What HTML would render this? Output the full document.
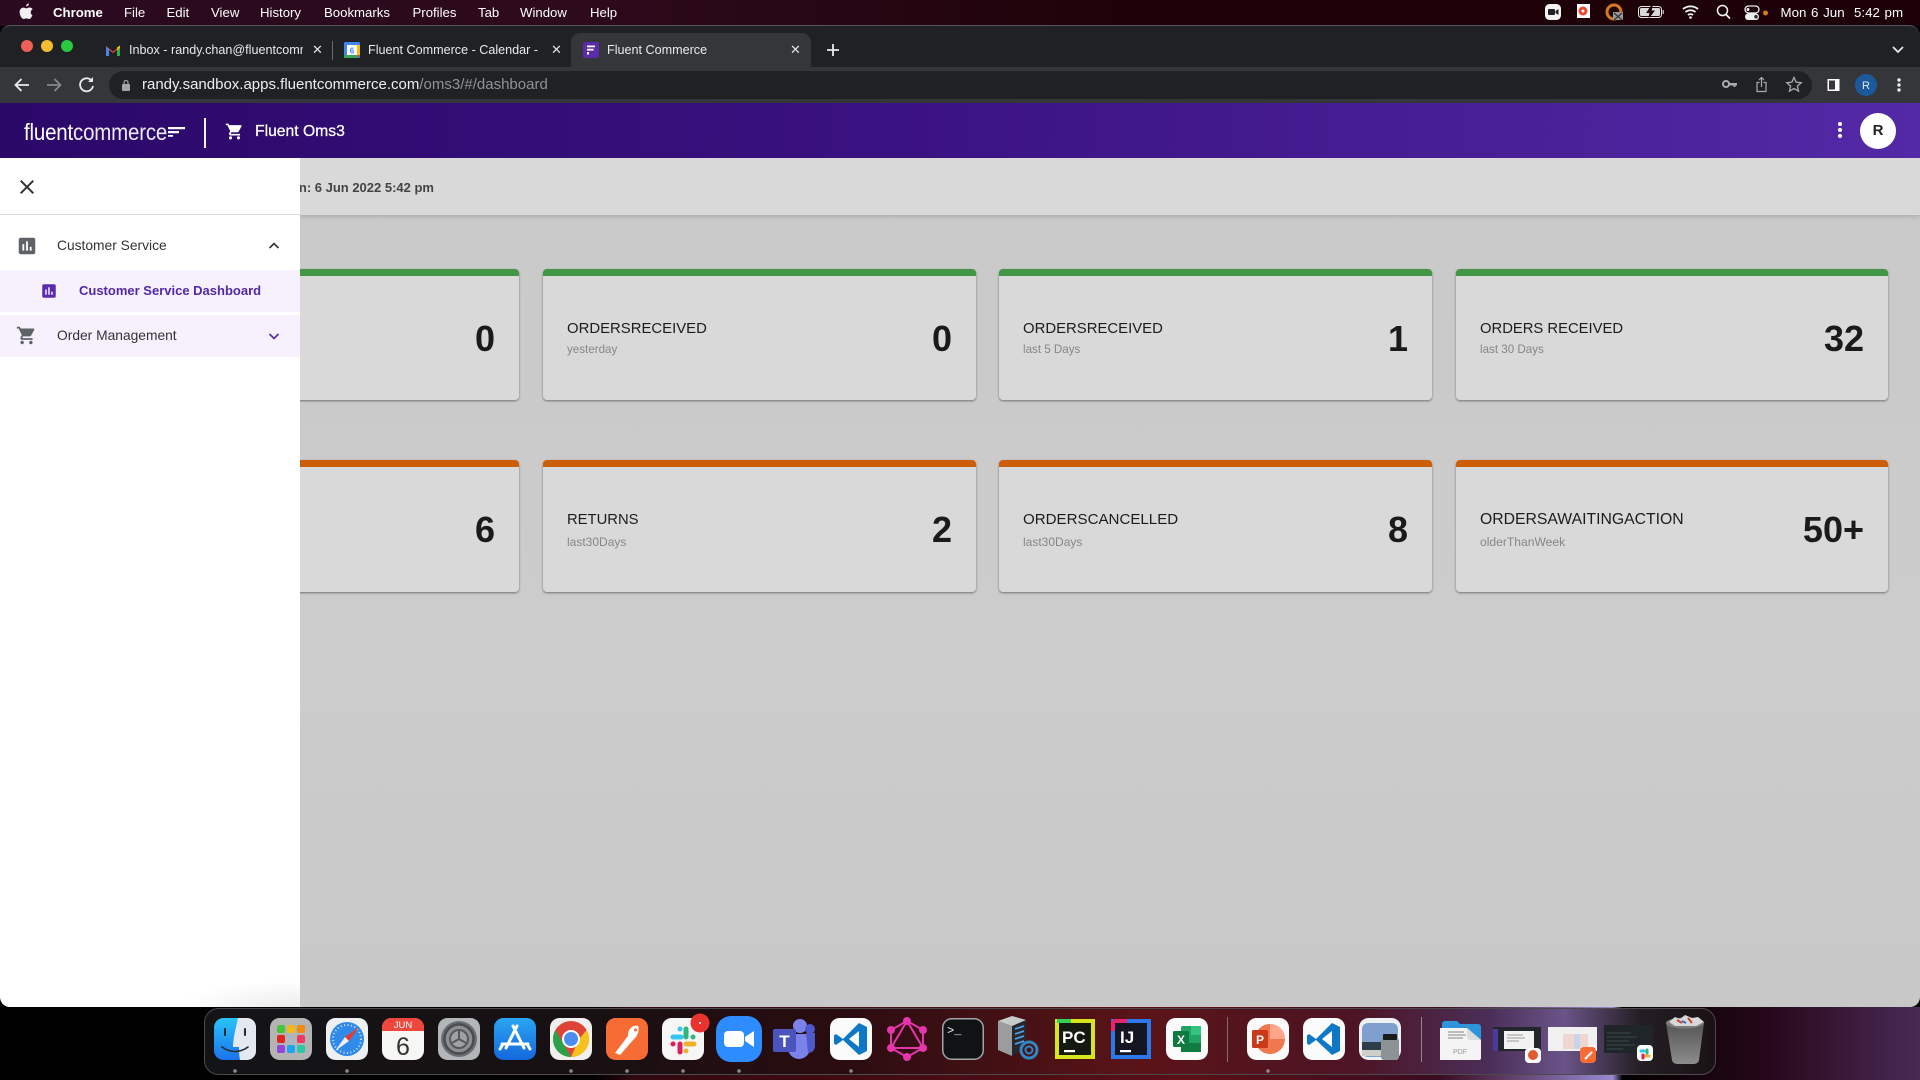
<!DOCTYPE html>
<html lang="en"><head><meta charset="utf-8"><title>Fluent Commerce</title>
<style>
*{box-sizing:border-box}
html,body{margin:0;padding:0;width:1920px;height:1080px;overflow:hidden;background:#000;font-family:"Liberation Sans",sans-serif}
.t{position:absolute;white-space:nowrap}
.abs{position:absolute}
#menubar{left:0;top:0;width:1920px;height:26px;background:linear-gradient(90deg,#2a0a1e 0%,#2d0a1c 30%,#1e0208 60%,#1c0208 100%);color:#fff;font-size:13.2px;line-height:25px}
#chrome{left:0;top:25px;width:1920px;height:78px;background:#202124;border-radius:11px 11px 0 0;border-top:1px solid #55565a}
#toolbar{left:0;top:67px;width:1920px;height:37px;background:#35363a;border-bottom:1px solid #55565a}
#pill{left:109px;top:71px;width:1703px;height:28px;background:#202124;border-radius:14px}
#activetab{left:571px;top:33px;width:240px;height:34px;background:#35363a;border-radius:9px 9px 0 0}
.tab{font-size:12.6px;line-height:16px;color:#e8eaed;top:42px;overflow:hidden}
.x{font-size:13px;color:#e0e2e5;top:43px;line-height:14px}
#head{left:0;top:103px;width:1920px;height:55px;background:linear-gradient(92deg,#2a0868 0%,#3a1180 45%,#5329a6 100%)}
#main{left:0;top:158px;width:1920px;height:849px;background:linear-gradient(180deg,#c9c9c9,#cccccc 60%,#c8c8c8);border-radius:0 0 10px 10px;overflow:hidden}
#bar{left:0;top:0;width:1920px;height:57px;background:#d9d9d9;box-shadow:0 1px 5px rgba(0,0,0,.18)}
.card{position:absolute;width:433px;background:#d9d9d9;border-radius:4px;box-shadow:0 1px 2px rgba(0,0,0,.45);overflow:hidden;color:#1c1c1c}
.card i{position:absolute;left:0;top:0;width:100%;height:7px}
.card b{position:absolute;right:24px;top:50px;font-size:36px;line-height:40px;font-weight:700;color:#1a1a1a}
.card span{position:absolute;left:24px;font-size:15px;line-height:18px;white-space:nowrap}
.card em{position:absolute;left:24px;font-style:normal;font-size:11.6px;line-height:14px;color:#868686;white-space:nowrap}
.r1{height:131px;top:111px}.r2{height:132px;top:302px}
.r1 span{top:51px}.r1 em{top:74px}.r2 span{top:51px}.r2 em{top:75px}
.g i{background:#429646}.o i{background:#cc5e0a}
#side{left:0;top:0;width:300px;height:849px;background:radial-gradient(120px 26px at 300px 849px,#ececec,#fff 100%);border-radius:0 0 0 10px;color:#333;z-index:3}
.row{position:absolute;left:0;width:300px;background:#f7f0fd}
.lab{font-size:13.8px;line-height:18px;color:#333}
#below{left:0;top:1007px;width:1920px;height:73px;background:linear-gradient(90deg,#000 0%,#000 31%,#300810 33%,#5a0f16 62%,#3a0c20 75%,#8d7cc0 83%,#9c88d0 84%,#000 84.5%,#0a0103 86%,#25081a 92%,#4a2a55 100%)}
</style></head><body>

<div id="menubar" class="abs">
<svg class="abs" style="left:19px;top:3px" width="14" height="17" viewBox="0 0 14 17"><path fill="#f2f2f2" d="M10 .5c.1 1.3-1.2 3-2.9 2.9C6.900 2 8.400.6 10 .5zM13.400 12.200c-.6 1.500-2 3.800-3.300 3.800-1 0-1.400-.6-2.700-.6s-1.700.6-2.700.6C3 16 .6 12.200.6 9.200c0-3 2-4.600 3.800-4.600 1.200 0 2.100.8 2.900.8.7 0 1.800-.9 3.200-.9.600 0 2.200.2 3.100 1.600-2.700 1.700-2.200 5.200-.2 6.100z"/></svg>
<span class="t" style="left:53px;font-weight:700">Chrome</span>
<span class="t" style="left:124px">File</span>
<span class="t" style="left:166.500px">Edit</span>
<span class="t" style="left:211px">View</span>
<span class="t" style="left:260px">History</span>
<span class="t" style="left:324px">Bookmarks</span>
<span class="t" style="left:412.500px">Profiles</span>
<span class="t" style="left:478px">Tab</span>
<span class="t" style="left:520px">Window</span>
<span class="t" style="left:590px">Help</span>
<svg class="abs" style="left:1530px;top:0" width="250" height="25" viewBox="0 0 250 25">
<rect x="15" y="4" width="16" height="16" rx="4.500" fill="#f4f4f4"/><rect x="18" y="9" width="7" height="6" rx="1" fill="#222"/><path d="M25.500 11l3-2v6l-3-2z" fill="#222"/>
<rect x="47" y="4" width="13" height="14" fill="#fff"/><circle cx="53" cy="11" r="4.500" fill="#e8482f"/><circle cx="53" cy="11" r="1.500" fill="#fff"/>
<circle cx="84" cy="12" r="7" fill="none" stroke="#d9791f" stroke-width="3"/><rect x="83" y="12" width="10" height="8" fill="#9a9a9a"/><path d="M84 13l8 7m0-7l-8 7" stroke="#333" stroke-width="1.200"/>
<rect x="108.500" y="6.500" width="23" height="11" rx="3" fill="none" stroke="#e8e8e8"/><rect x="110" y="8" width="20" height="8" rx="1.500" fill="#d8d8d8"/><path d="M121 6.500l-4 6h3l-1 5 5-6.500h-3l1-4.500z" fill="#1e0208" stroke="#1e0208"/><rect x="132.500" y="10" width="1.500" height="4" fill="#aaa"/>
<path d="M153 9a12 12 0 0 1 15 0M155.500 12a8 8 0 0 1 10 0M158 15a4 4 0 0 1 5 0" fill="none" stroke="#f4f4f4" stroke-width="1.800"/><circle cx="160.500" cy="17.500" r="1.300" fill="#fff"/>
<circle cx="192.500" cy="10.500" r="5" fill="none" stroke="#f2f2f2" stroke-width="1.500"/><path d="M196 14.500l4 4" stroke="#f2f2f2" stroke-width="1.800"/>
<rect x="215" y="6" width="14" height="7" rx="3.500" fill="none" stroke="#eee" stroke-width="1.300"/><rect x="215" y="13.500" width="14" height="6.500" rx="3.200" fill="#eee"/><circle cx="218" cy="9.500" r="1.500" fill="#eee"/><circle cx="226" cy="16.700" r="1.800" fill="#333"/>
<circle cx="235.500" cy="13" r="2.500" fill="#d9791f"/></svg>
<span class="t" style="left:1780.500px;font-size:13.300px;word-spacing:1px">Mon 6 Jun&nbsp; 5:42 pm</span>
</div>

<div id="chrome" class="abs"></div>
<div id="toolbar" class="abs"></div>
<div id="activetab" class="abs"></div>
<div id="pill" class="abs"></div>

<svg class="abs" style="left:0;top:30px" width="90" height="30"><circle cx="27" cy="16" r="6" fill="#ed5f57"/><circle cx="47" cy="16" r="6" fill="#f5bd30"/><circle cx="67" cy="16" r="6" fill="#2ac840"/></svg>
<svg class="abs" style="left:105px;top:44px" width="16" height="13" viewBox="0 0 16 13"><path d="M1 12V2l7 5.500L15 2v10h-3V6L8 9 4 6v6z" fill="#ea4335"/><path d="M1 12V2.500L4 5v7z" fill="#4285f4"/><path d="M15 12V2.500L12 5v7z" fill="#34a853"/><path d="M15 1.500V4l-3 2.300V3.500z" fill="#fbbc04"/></svg>
<div class="t tab" style="left:129px;width:174px">Inbox - randy.chan@fluentcommerce</div>
<div class="t x" style="left:312px">✕</div>
<div class="abs" style="left:332px;top:41px;width:1px;height:19px;background:#6a6b6f"></div>
<svg class="abs" style="left:344px;top:42px" width="16" height="16" viewBox="0 0 16 16"><rect width="16" height="16" rx="1.500" fill="#4285f4"/><rect x="3" y="3" width="10" height="10" fill="#fff"/><rect y="13" width="13" height="3" fill="#34a853"/><rect x="13" y="3" width="3" height="10" fill="#fbbc04"/><path d="M13 13h3l-3 3z" fill="#ea4335"/><text x="8" y="11.500" font-size="8" font-weight="700" text-anchor="middle" fill="#4285f4" font-family="Liberation Sans">6</text></svg>
<div class="t tab" style="left:368px;width:172px">Fluent Commerce - Calendar - Jun</div>
<div class="t x" style="left:551px">✕</div>
<svg class="abs" style="left:583px;top:42px" width="16" height="16" viewBox="0 0 16 16"><rect width="16" height="16" rx="2" fill="#5a2ca8"/><path d="M4 3.500h8v1.800H4zM4 6.800h6.500v1.800H4zM4 10h2v2.500H4z" fill="#fff"/></svg>
<div class="t tab" style="left:607px">Fluent Commerce</div>
<div class="t x" style="left:790px">✕</div>
<svg class="abs" style="left:826px;top:43px" width="14" height="14"><path d="M7 1v12M1 7h12" stroke="#e8eaed" stroke-width="1.800"/></svg>
<svg class="abs" style="left:1890px;top:45px" width="16" height="10"><path d="M3 2l5 5 5-5" fill="none" stroke="#e8eaed" stroke-width="1.700"/></svg>

<svg class="abs" style="left:13px;top:75px" width="90" height="20" viewBox="0 0 90 20"><path d="M16 10H3m5.500-6L2.500 10l6 6" fill="none" stroke="#e8eaed" stroke-width="1.800"/><path d="M34 10h13m-5.500-6l6 6-6 6" fill="none" stroke="#85878b" stroke-width="1.800"/><path d="M78.500 5.500a6.500 6.500 0 1 0 1.500 5.500" fill="none" stroke="#e8eaed" stroke-width="1.800"/><path d="M80 2v5h-5z" fill="#e8eaed"/></svg>
<svg class="abs" style="left:121px;top:79px" width="10" height="12" viewBox="0 0 10 12"><rect x="1" y="5" width="8" height="7" rx="1" fill="#a3a6aa"/><path d="M3 5V3.500a2 2 0 0 1 4 0V5" fill="none" stroke="#a3a6aa" stroke-width="1.200"/></svg>
<div class="t" style="left:142px;top:76px;font-size:15px;line-height:18px;color:#eceef0">randy.sandbox.apps.fluentcommerce.com<span style="color:#8f9296">/oms3/#/dashboard</span></div>
<svg class="abs" style="left:1720px;top:74px" width="190" height="22" viewBox="0 0 190 22">
<circle cx="6" cy="10" r="3" fill="none" stroke="#a8abaf" stroke-width="2"/><path d="M9 9h8v2.500h-1.500V13h-2v-1.500H9z" fill="#a8abaf"/>
<path d="M39.500 8.500h-2.500v9h9v-9h-2.500" fill="none" stroke="#a8abaf" stroke-width="1.200"/><path d="M41.500 13V3.500M39 6l2.500-2.500L44 6" fill="none" stroke="#a8abaf" stroke-width="1.200"/>
<path d="M74 3.500l2.100 4.700 5.100.5-3.800 3.400 1.100 5-4.500-2.600-4.500 2.600 1.100-5-3.800-3.400 5.100-.5z" fill="none" stroke="#a8abaf" stroke-width="1.300"/>
<rect x="107.500" y="5" width="12" height="12" fill="#fff"/><rect x="109" y="6.500" width="6" height="9" fill="#35363a"/>
<circle cx="146" cy="11" r="11" fill="#1a5a9c"/><text x="146" y="15" font-size="11" fill="#e8eaed" text-anchor="middle" font-family="Liberation Sans">R</text>
<circle cx="179" cy="6" r="1.700" fill="#e8eaed"/><circle cx="179" cy="11" r="1.700" fill="#e8eaed"/><circle cx="179" cy="16" r="1.700" fill="#e8eaed"/></svg>

<div id="head" class="abs">
<div class="t" style="left:24px;top:15px;color:#fff;font-size:23px;line-height:28px;transform:scaleX(.89);transform-origin:0 50%;letter-spacing:-.2px"><span style="font-weight:400">fluent</span><span style="opacity:.92;font-weight:400">commerce</span></div>
<svg class="abs" style="left:167px;top:22px" width="19" height="14"><path d="M1 2h17v2.200H1zM1 6h11v2.200H1zM1 10h5v1.800H1z" fill="#fff"/></svg>
<div class="abs" style="left:204px;top:15px;width:1.500px;height:30px;background:#f2f0f8"></div>
<svg class="abs" style="left:225px;top:19px" width="19" height="19" viewBox="0 0 24 24"><path fill="#fff" d="M7 18c-1.100 0-1.990.9-1.990 2S5.900 22 7 22s2-.9 2-2-.9-2-2-2zM1 2v2h2l3.600 7.590-1.350 2.450c-.16.28-.25.61-.25.96 0 1.100.9 2 2 2h12v-2H7.420c-.14 0-.25-.11-.25-.25l.03-.12.9-1.630h7.450c.75 0 1.410-.41 1.750-1.030l3.580-6.470c.08-.14.12-.31.12-.48 0-.55-.45-1-1-1H5.210l-.94-2H1zm16 16c-1.100 0-1.990.9-1.990 2s.89 2 1.990 2 2-.9 2-2-.9-2-2-2z"/></svg>
<div class="t" style="left:255px;top:19px;color:#fff;font-size:15.700px;line-height:20px;-webkit-text-stroke:.25px #fff">Fluent Oms3</div>
<svg class="abs" style="left:1836px;top:17px" width="8" height="20"><circle cx="4" cy="4" r="2" fill="#fff"/><circle cx="4" cy="10" r="2" fill="#fff"/><circle cx="4" cy="16" r="2" fill="#fff"/></svg>
<div class="abs" style="left:1860px;top:10px;width:36px;height:36px;border-radius:50%;background:#fff;color:#222;font-weight:700;font-size:15px;line-height:36px;text-align:center">R</div>
</div>

<div id="main" class="abs">
<div id="bar" class="abs"></div>
<div class="t" style="left:234px;width:200px;top:21px;text-align:right;font-size:13px;line-height:18px;font-weight:700;color:#444;z-index:1">n: 6 Jun 2022 5:42 pm</div>

<div class="card g r1" style="left:86px"><i></i><b>0</b></div>
<div class="card g r1" style="left:543px"><i></i><span style="font-size:14.900px">ORDERSRECEIVED</span><em>yesterday</em><b>0</b></div>
<div class="card g r1" style="left:999px"><i></i><span style="font-size:14.900px">ORDERSRECEIVED</span><em>last 5 Days</em><b>1</b></div>
<div class="card g r1" style="left:1456px;width:432px"><i></i><span style="font-size:14.800px">ORDERS RECEIVED</span><em>last 30 Days</em><b>32</b></div>

<div class="card o r2" style="left:86px"><i></i><b>6</b></div>
<div class="card o r2" style="left:543px"><i></i><span style="font-size:14.800px">RETURNS</span><em style="font-size:12px">last30Days</em><b>2</b></div>
<div class="card o r2" style="left:999px"><i></i><span style="font-size:15.100px">ORDERSCANCELLED</span><em style="font-size:12px">last30Days</em><b>8</b></div>
<div class="card o r2" style="left:1456px;width:432px"><i></i><span style="font-size:15.750px">ORDERSAWAITINGACTION</span><em style="font-size:12.100px">olderThanWeek</em><b>50+</b></div>

<div id="side" class="abs">
<svg class="abs" style="left:15px;top:16.500px" width="24" height="24" viewBox="0 0 24 24"><path fill="#333" d="M19 6.410 17.590 5 12 10.590 6.410 5 5 6.410 10.590 12 5 17.590 6.410 19 12 13.410 17.590 19 19 17.590 13.410 12z"/></svg>
<div class="abs" style="left:0;top:56px;width:300px;height:1px;background:#dcdcdc"></div>
<svg class="abs" style="left:16px;top:77px" width="22" height="22" viewBox="0 0 24 24"><path fill="#5f6368" d="M19 3H5c-1.100 0-2 .9-2 2v14c0 1.100.9 2 2 2h14c1.100 0 2-.9 2-2V5c0-1.100-.9-2-2-2zM9 17H7v-7h2v7zm4 0h-2V7h2v10zm4 0h-2v-4h2v4z"/></svg>
<div class="t lab" style="left:57px;top:79px">Customer Service</div>
<svg class="abs" style="left:267px;top:81px" width="14" height="14"><path d="M2.500 9L7 4.500 11.500 9" fill="none" stroke="#333" stroke-width="1.600"/></svg>
<div class="row" style="top:112px;height:42px"></div>
<svg class="abs" style="left:40px;top:124px" width="18" height="18" viewBox="0 0 24 24"><path fill="#5b2aad" d="M19 3H5c-1.100 0-2 .9-2 2v14c0 1.100.9 2 2 2h14c1.100 0 2-.9 2-2V5c0-1.100-.9-2-2-2zM9 17H7v-7h2v7zm4 0h-2V7h2v10zm4 0h-2v-4h2v4z"/></svg>
<div class="t" style="left:79px;top:124px;font-size:13px;line-height:18px;font-weight:700;color:#5328a6">Customer Service Dashboard</div>
<div class="row" style="top:157px;height:42px"></div>
<svg class="abs" style="left:16px;top:167px" width="21" height="21" viewBox="0 0 24 24"><path fill="#5f6368" d="M7 18c-1.100 0-1.990.9-1.990 2S5.900 22 7 22s2-.9 2-2-.9-2-2-2zM1 2v2h2l3.600 7.590-1.350 2.450c-.16.28-.25.61-.25.96 0 1.100.9 2 2 2h12v-2H7.420c-.14 0-.25-.11-.25-.25l.03-.12.9-1.630h7.450c.75 0 1.410-.41 1.750-1.030l3.580-6.470c.08-.14.12-.31.12-.48 0-.55-.45-1-1-1H5.210l-.94-2H1zm16 16c-1.100 0-1.990.9-1.990 2s.89 2 1.990 2 2-.9 2-2-.9-2-2-2z"/></svg>
<div class="t lab" style="left:57px;top:169px">Order Management</div>
<svg class="abs" style="left:267px;top:171px" width="14" height="14"><path d="M2.500 5L7 9.500 11.500 5" fill="none" stroke="#5328a6" stroke-width="1.600"/></svg>
</div>
</div>

<div id="below" class="abs"></div>

<svg class="abs" style="left:0;top:1007px" width="1920" height="73" viewBox="0 1007 1920 73" font-family="Liberation Sans">
<defs>
<linearGradient id="dk" x1="0" x2="1" y1="0" y2="0"><stop offset="0" stop-color="#131416"/><stop offset=".26" stop-color="#181012"/><stop offset=".42" stop-color="#2a0c10"/><stop offset=".62" stop-color="#5a1418"/><stop offset=".76" stop-color="#4d1424"/><stop offset=".85" stop-color="#4a2e58"/><stop offset=".9" stop-color="#6a5488"/><stop offset=".95" stop-color="#241e24"/><stop offset="1" stop-color="#1a1214"/></linearGradient>
<linearGradient id="fn" x1="0" x2="0" y1="0" y2="1"><stop offset="0" stop-color="#2ac3fb"/><stop offset="1" stop-color="#1b73ec"/></linearGradient>
<linearGradient id="ast" x1="0" x2="0" y1="0" y2="1"><stop offset="0" stop-color="#2ba6f3"/><stop offset="1" stop-color="#1468dc"/></linearGradient>
<linearGradient id="tr" x1="0" x2="0" y1="0" y2="1"><stop offset="0" stop-color="#555"/><stop offset="1" stop-color="#8c8c8c"/></linearGradient>
</defs>
<rect x="204.500" y="1008.500" width="1511" height="66" rx="14" fill="url(#dk)" stroke="#4c4a4c"/>
<g transform="translate(214,1018)"><rect width="42" height="42" rx="9.500" fill="url(#fn)"/><path d="M24 0h9c5 0 9 4 9 9v24c0 5-4 9-9 9h-7c-1-6-1-10-1-13h-6c0-7 2-16 5-29z" fill="#e4e8f0"/><path d="M11 11v6M31 11v6" stroke="#2a2a2a" stroke-width="2" stroke-linecap="round"/><path d="M8 29c8 6 18 6 26 0" fill="none" stroke="#2a2a2a" stroke-width="1.600" stroke-linecap="round"/></g>
<g transform="translate(270,1018)"><rect width="42" height="42" rx="9.500" fill="#b4b4b4"/><g><rect x="7" y="7" width="8" height="8" rx="2" fill="#47c43e"/><rect x="17" y="7" width="8" height="8" rx="2" fill="#f5b915"/><rect x="27" y="7" width="8" height="8" rx="2" fill="#f28a12"/><rect x="7" y="17" width="8" height="8" rx="2" fill="#e0261f"/><rect x="17" y="17" width="8" height="8" rx="2" fill="#a9b6bd"/><rect x="27" y="17" width="8" height="8" rx="2" fill="#ec3a60"/><rect x="7" y="27" width="8" height="8" rx="2" fill="#9345d8"/><rect x="17" y="27" width="8" height="8" rx="2" fill="#1fa4f3"/><rect x="27" y="27" width="8" height="8" rx="2" fill="#2cc8a6"/></g></g>
<g transform="translate(326,1018)"><rect width="42" height="42" rx="9.500" fill="#eef0f2"/><circle cx="21" cy="21" r="17" fill="#2f8ae8"/><circle cx="21" cy="21" r="14" fill="none" stroke="#d5e6fa" stroke-width="2" stroke-dasharray="1 2.500"/><path d="M33 9L19 19l4 4z" fill="#e63a35"/><path d="M9 33l10-14 4 4z" fill="#f0f0f0"/></g>
<g transform="translate(382,1018)"><rect width="42" height="42" rx="9.500" fill="#f6f6f4"/><path d="M0 13V9.500C0 4 4 0 9.500 0h23C38 0 42 4 42 9.500V13z" fill="#f0473d"/><text x="21" y="10" font-size="9.500" fill="#fff" text-anchor="middle">JUN</text><text x="21" y="37" font-size="25" fill="#333" text-anchor="middle">6</text></g>
<g transform="translate(438,1018)"><rect width="42" height="42" rx="9.500" fill="#b2b6b8"/><circle cx="21" cy="21" r="18" fill="#6a6e72"/><circle cx="21" cy="21" r="14.500" fill="#8c9094" stroke="#4a4c4e" stroke-width="2.500"/><circle cx="21" cy="21" r="9" fill="#9ea2a4" stroke="#56585a" stroke-width="2"/><path d="M21 21V12M21 21l8 4.500M21 21l-8 4.500" stroke="#56585a" stroke-width="2"/></g>
<g transform="translate(494,1018)"><rect width="42" height="42" rx="9.500" fill="url(#ast)"/><path d="M23 8L12 30M19 8l11 22M8 26h26M6 31l3-5M36 31l-3-5" stroke="#fff" stroke-width="3" stroke-linecap="round" fill="none"/></g>
<g transform="translate(550,1018)"><rect width="42" height="42" rx="9.500" fill="#f0f0ee"/><circle cx="21" cy="21" r="18" fill="#dd4436"/><path d="M36.600 12A18 18 0 0 1 21 39l8-18z" fill="#f8c21c"/><path d="M21 39A18 18 0 0 1 5.400 12L13 25z" fill="#2aa24a"/><circle cx="21" cy="21" r="9" fill="#fff"/><circle cx="21" cy="21" r="7" fill="#4a8cf0"/></g>
<g transform="translate(606,1018)"><rect width="42" height="42" rx="9.500" fill="#f76b35"/><path d="M9 35l13-17 6 3-14 16z" fill="#fff"/><path d="M22 18c-1-6 5-12 10-10 2 4-1 11-4 13z" fill="#fff"/><circle cx="29.500" cy="12" r="1.500" fill="#f76b35"/></g>
<g transform="translate(662,1018)"><rect width="42" height="42" rx="9.500" fill="#f6f6f6"/><g stroke-linecap="round" stroke-width="5" fill="none"><path d="M11 19h8" stroke="#36c5f0"/><path d="M18 11v0" stroke="#36c5f0"/><path d="M24 11v8" stroke="#2eb67d"/><path d="M31 19v0" stroke="#2eb67d"/><path d="M24 26h8" stroke="#ecb22e"/><path d="M24 33v0" stroke="#ecb22e"/><path d="M18 26v8" stroke="#e01e5a"/><path d="M11 26v0" stroke="#e01e5a"/></g></g>
<circle cx="700" cy="1023" r="9.500" fill="#e8332e"/><circle cx="700" cy="1023" r="1" fill="#fff"/>
<g transform="translate(716,1016)"><rect width="46" height="46" rx="15" fill="#2d8cff"/><rect x="8" y="15" width="20" height="16" rx="4" fill="#fff"/><path d="M29 21l9-6v16l-9-6z" fill="#fff"/></g>
<g transform="translate(772,1018)"><circle cx="28" cy="8" r="7" fill="#7b83eb"/><circle cx="38" cy="11" r="5" fill="#5059c9"/><path d="M16 16h22v14a11 11 0 0 1-22 0z" fill="#7b83eb"/><path d="M34 15h9v13c0 4-3 7-7 7z" fill="#5059c9"/><rect x="1" y="11" width="23" height="23" rx="2" fill="#4b53bc"/><text x="12.500" y="29" font-size="17" font-weight="700" fill="#fff" text-anchor="middle">T</text></g>
<g transform="translate(830,1018)"><rect width="42" height="42" rx="9.500" fill="#fbfbfb"/><path d="M29 5l8 4v24l-8 4-16-15-7 5-2-1.500V17.500L6 16l7 5z" fill="#0e78c6"/><path d="M29 13L19 21l10 8z" fill="#fbfbfb"/></g>
<g transform="translate(886,1016)" fill="none" stroke="#e535ab" stroke-width="2"><path d="M21 5L37 14v18L21 41 5 32V14zM21 5L5 32h32z"/><g fill="#e535ab" stroke="none"><circle cx="21" cy="5" r="4"/><circle cx="37" cy="14" r="4"/><circle cx="37" cy="32" r="4"/><circle cx="21" cy="41" r="4"/><circle cx="5" cy="32" r="4"/><circle cx="5" cy="14" r="4"/></g></g>
<g transform="translate(942,1018)"><rect x=".75" y=".75" width="40.500" height="40.500" rx="9" fill="#101214" stroke="#a2a6a8" stroke-width="1.500"/><text x="5" y="16" font-size="12" fill="#f2f2f2" font-family="Liberation Mono">&gt;_</text></g>
<g transform="translate(996,1015)"><path d="M2 6L16 1l14 4v28l-14 8L2 35z" fill="#26282c"/><path d="M2 6l14 5v30L2 35z" fill="#9a9c9e"/><path d="M2 6L16 1l14 4-14 6z" fill="#c8cacc"/><path d="M19 14l9-3M19 19l9-3M19 24l9-3M19 29l9-3" stroke="#4a9be0" stroke-width="1.800"/><circle cx="33" cy="35" r="8" fill="none" stroke="#2f86c4" stroke-width="3"/><circle cx="33" cy="35" r="3.500" fill="none" stroke="#2f86c4" stroke-width="2"/></g>
<g transform="translate(1055,1019)"><rect width="40" height="40" fill="#141a10"/><rect x="2" y="2" width="36" height="36" fill="none" stroke="#d7e51e" stroke-width="4"/><path d="M2 2h14" stroke="#34d058" stroke-width="4"/><text x="7" y="24" font-size="17" font-weight="700" fill="#fff">PC</text><rect x="9" y="31" width="11" height="2.200" fill="#fff"/></g>
<g transform="translate(1111,1019)"><rect width="40" height="40" fill="#161622"/><rect x="2" y="2" width="36" height="36" fill="none" stroke="#2a78ea" stroke-width="4"/><path d="M2 2h14M2 2v10" stroke="#e8246c" stroke-width="4"/><text x="9" y="24" font-size="17" font-weight="700" fill="#fff">IJ</text><rect x="9" y="31" width="11" height="2.200" fill="#fff"/></g>
<g transform="translate(1166,1018)"><rect width="42" height="42" rx="9.500" fill="#fbfbfb"/><rect x="15" y="8" width="20" height="26" rx="2" fill="#21a366"/><rect x="25" y="8" width="10" height="9" fill="#33c481"/><rect x="15" y="25" width="20" height="9" fill="#107c41"/><rect x="7" y="13" width="16" height="16" rx="1.500" fill="#0f7a3f"/><text x="15" y="26" font-size="12" font-weight="700" fill="#fff" text-anchor="middle">X</text></g>
<rect x="1227" y="1017" width="1" height="45" fill="#8a6a6a"/>
<g transform="translate(1247,1018)"><rect width="42" height="42" rx="9.500" fill="#fbfbfb"/><circle cx="23" cy="21" r="15" fill="#f0774e"/><path d="M23 6a15 15 0 0 1 15 15H23z" fill="#ffa58a"/><rect x="5" y="12" width="16" height="18" rx="1.500" fill="#c83a1a"/><text x="13" y="26" font-size="12" font-weight="700" fill="#fff" text-anchor="middle">P</text></g>
<g transform="translate(1303,1018)"><rect width="42" height="42" rx="9.500" fill="#fbfbfb"/><path d="M29 5l8 4v24l-8 4-16-15-7 5-2-1.500V17.500L6 16l7 5z" fill="#0e78c6"/><path d="M29 13L19 21l10 8z" fill="#fbfbfb"/></g>
<g transform="translate(1359,1018)"><rect width="42" height="42" rx="9.500" fill="#eef0f3"/><rect x="3" y="5" width="36" height="34" rx="6" fill="#7f9fcf"/><rect x="3" y="24" width="36" height="8" fill="#2d3d4a"/><rect x="3" y="32" width="36" height="6" fill="#cfcfc8"/><rect x="22" y="20" width="18" height="22" rx="3" fill="#8d9296"/><rect x="24" y="16" width="14" height="6" rx="1" fill="#1a1a1a"/></g>
<rect x="1421" y="1017" width="1" height="45" fill="#9a8090"/>
<g transform="translate(1439,1018)"><path d="M3 6a3 3 0 0 1 3-3h12l3 3h18a3 3 0 0 1 3 3v14H3z" fill="#2e95dc"/><path d="M1 10h27l14 12v18a2 2 0 0 1-2 2H1z" fill="#f4f4f4"/><path d="M28 10l14 12H32c-3 0-4-2-4-4z" fill="#dcdcdc"/><g stroke="#9a9a9a" stroke-width="1.200"><path d="M9 14h16M9 17h18M9 20h15"/></g><text x="21" y="36" font-size="7" fill="#999" text-anchor="middle">PDF</text></g>
<g transform="translate(1493,1027)"><rect width="48" height="24" y="0" fill="#23262a"/><rect x="0" y="2" width="5" height="22" fill="#4a3aa0"/><rect x="11" y="4" width="30" height="18" fill="#f2f2f2"/><g stroke="#999"><path d="M14 8h16M14 11h18M14 14h12"/></g><rect x="32" y="21" width="16" height="15" rx="4" fill="#fbfbfb"/><circle cx="40" cy="28" r="5" fill="#e05b30"/></g>
<g transform="translate(1548,1027)"><rect width="49" height="24" fill="#f0f0f0"/><rect x="15" y="7" width="25" height="15" fill="#f0d6d0"/><rect x="26" y="7" width="6" height="15" fill="#c8d4e8"/><rect x="32" y="20" width="16" height="16" rx="4" fill="#f76b35"/><path d="M37 32l7-7" stroke="#fff" stroke-width="2"/></g>
<g transform="translate(1604,1025)"><rect width="49" height="28" fill="#1f2528"/><g stroke="#3f4a4a"><path d="M3 8h24M3 12h30M3 16h22M3 20h28M3 24h16"/></g><rect x="33" y="20" width="16" height="16" rx="4" fill="#fbfbfb"/><g stroke-width="3" stroke-linecap="round" fill="none"><path d="M37 26h3" stroke="#36c5f0"/><path d="M43 25v3" stroke="#2eb67d"/><path d="M42 31h3" stroke="#ecb22e"/><path d="M39 30v3" stroke="#e01e5a"/></g></g>
<g transform="translate(1663,1014)"><path d="M3 9h38l-5 37c-.5 3-3 4-6 4H15c-3 0-5.500-1-6-4z" fill="url(#tr)"/><ellipse cx="22" cy="9" rx="19" ry="5.500" fill="#7b7b7b"/><path d="M6 8l6-5 5 2 5-4 7 3 6-1 6 5-8 4H12z" fill="#d8d8d8"/><path d="M14 6l5 3M25 4l4 5" stroke="#c8423a" stroke-width="2"/><path d="M19 7l4 2" stroke="#3a6ac8" stroke-width="2"/></g>
<g fill="#8c8c8c"><circle cx="235" cy="1071" r="1.800"/><circle cx="347" cy="1071" r="1.800"/><circle cx="571" cy="1071" r="1.800"/><circle cx="627" cy="1071" r="1.800"/><circle cx="683" cy="1071" r="1.800"/><circle cx="739" cy="1071" r="1.800"/><circle cx="851" cy="1071" r="1.800"/><circle cx="1268" cy="1071" r="1.800"/></g>
</svg>
</body></html>
